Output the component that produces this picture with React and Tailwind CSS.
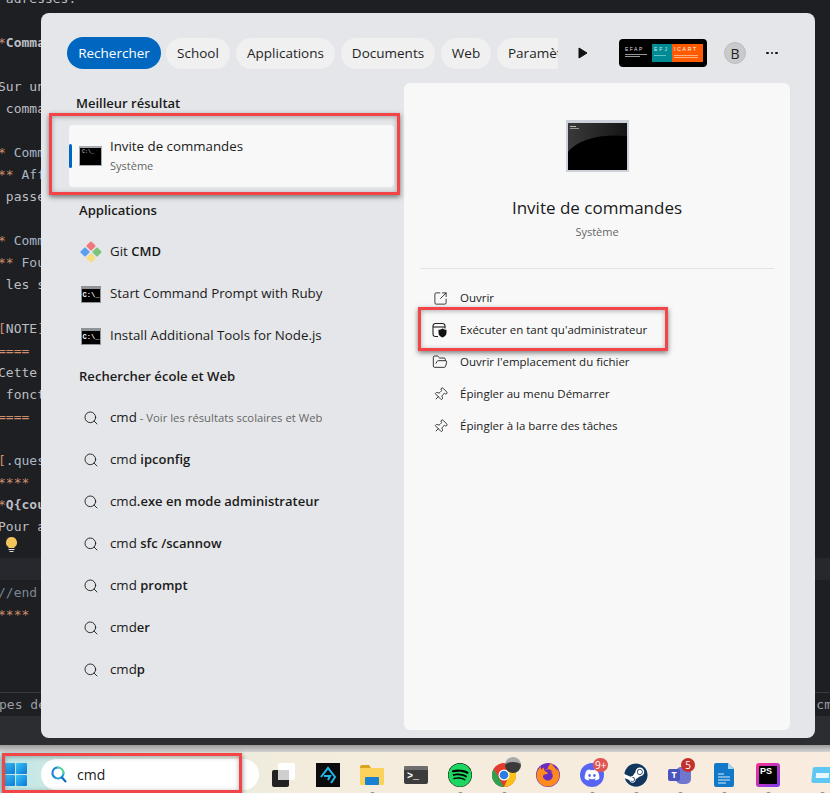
import React from 'react';
import { ChevronRight, Search, SquareArrowOutUpRight, FolderOpen, Pin } from 'lucide-react';
import { FaSpotify, FaDiscord, FaSteam, FaFirefoxBrowser } from 'react-icons/fa';

const editorLines = [
  [['', ' adresses:']],
  [],
  [['*', ''], ['b', 'Comma']],
  [],
  [['', 'Sur un']],
  [['', ' comma']],
  [],
  [['*', '* '], ['c', 'Comm']],
  [['*', '** '], ['c', 'Aff']],
  [['', ' passe']],
  [],
  [['*', '* '], ['c', 'Comm']],
  [['*', '** '], ['c', 'Fou']],
  [['', ' les s']],
  [],
  [['*', '['], ['', 'NOTE'], ['*', ']']],
  [['*', '====']],
  [['', 'Cette']],
  [['', ' fonct']],
  [['*', '====']],
  [],
  [['*', '['], ['c', '.ques']],
  [['*', '****']],
  [['*', '*'], ['b', 'Q{cou']],
  [['', 'Pour a']],
];

const apps = [
  { label: 'Start Command Prompt with Ruby' },
  { label: 'Install Additional Tools for Node.js' },
];

const webResults = [
  { plain: 'cmd', hint: ' - Voir les résultats scolaires et Web' },
  { plain: 'cmd ', bold: 'ipconfig' },
  { plain: 'cmd', bold: '.exe en mode administrateur' },
  { plain: 'cmd ', bold: 'sfc /scannow' },
  { plain: 'cmd ', bold: 'prompt' },
  { plain: 'cmd', bold: 'er' },
  { plain: 'cmd', bold: 'p' },
];

const tabs = [
  { label: 'School', w: 'w-[64px]' },
  { label: 'Applications', w: 'w-[99px]' },
  { label: 'Documents', w: 'w-[94px]' },
  { label: 'Web', w: 'w-[50px]' },
];

function CmdIcon() {
  return (
    <div className="w-[20px] h-[17px] bg-[#8f9296] flex flex-col px-[1px] pb-[1px] pt-[3px]">
      <div className="flex-1 bg-black overflow-hidden text-white text-[7px] leading-[12px] font-bold font-['Liberation_Mono',monospace] text-center">
        C:\_
      </div>
    </div>
  );
}

// the best-match tile uses a bigger icon with the prompt in its corner
function BestCmdIcon() {
  return (
    <div className="w-[23px] h-[20px] bg-[#a9abb0] flex flex-col px-[1px] pb-[1px] pt-[2px]">
      <div className="flex-1 bg-black overflow-hidden text-[#ddd] text-[5px] leading-[8px] pl-[2px] font-['Liberation_Mono',monospace]">
        C:\_
      </div>
    </div>
  );
}

function GitIcon() {
  return (
    <svg width="22" height="22" viewBox="0 0 22 22">
      <rect x="7.5" y="1.5" width="7" height="7" rx="1" transform="rotate(45 11 5)" fill="#f0787a" />
      <rect x="13.5" y="7.5" width="7" height="7" rx="1" transform="rotate(45 17 11)" fill="#7cc47a" />
      <rect x="7.5" y="13.5" width="7" height="7" rx="1" transform="rotate(45 11 17)" fill="#f7df7e" />
      <rect x="1.5" y="7.5" width="7" height="7" rx="1" transform="rotate(45 5 11)" fill="#5c9ff0" />
    </svg>
  );
}

function ShieldWindow() {
  return (
    <svg width="16" height="16" viewBox="0 0 16 16" fill="none" stroke="#1f1f1f" strokeWidth="1.1">
      <path d="M6 14.5H3.500A2.500 2.500 0 0 1 1 12V4A2.500 2.500 0 0 1 3.500 1.500h7A2.500 2.500 0 0 1 13 4v2.500" />
      <path d="M1 5h12" />
      <path d="M10.500 6.500c1.200 1 2.500 1.300 4 1.300v3c0 2.500-1.800 4-4 4.700-2.200-.7-4-2.200-4-4.700v-3c1.500 0 2.800-.3 4-1.300z" fill="#111" stroke="none" />
    </svg>
  );
}

function LargeCmdIcon() {
  return (
    <div className="w-[63px] h-[52px] bg-[#cdd1d9] pt-[3px] px-[2px] pb-[2px]">
      <svg width="59" height="47" viewBox="0 0 59 47" className="block">
        <defs>
          <linearGradient id="cmdGlow" x1="0" y1="0" x2="1" y2="0">
            <stop offset="0" stopColor="#3a3a3a" />
            <stop offset="1" stopColor="#151515" />
          </linearGradient>
        </defs>
        <rect width="59" height="47" fill="#000" />
        <path d="M0 0h59v13C38 11 12 14 0 29z" fill="url(#cmdGlow)" />
        <rect x="2" y="3" width="6" height="1" fill="#bbb" />
        <rect x="2" y="5" width="9" height="1" fill="#999" />
      </svg>
    </div>
  );
}

function SchoolLogo() {
  return (
    <div className="w-[88px] h-[28px] bg-black rounded-[4px] flex items-center pl-[6px] font-['Liberation_Sans',sans-serif]">
      <div className="w-[27px] h-[18px] pt-[2px]">
        <p className="text-[5px] leading-[7px] tracking-[1.5px] text-[#ddd] whitespace-nowrap">EFAP</p>
        <div className="mt-[1px] w-[22px] h-[1px] bg-[#999]" />
        <div className="mt-[1px] w-[15px] h-[1px] bg-[#999]" />
      </div>
      <div className="w-[20px] h-[18px] bg-[#008a94] pt-[2px] pl-[2px]">
        <p className="text-[5px] leading-[7px] tracking-[2px] text-[#cfeef0] whitespace-nowrap">EFJ</p>
        <div className="mt-[2px] w-[12px] h-[1px] bg-[#5fc0c6]" />
      </div>
      <div className="w-[31px] h-[18px] bg-[#ff5a00] pt-[2px] pl-[2px]">
        <p className="text-[5px] leading-[7px] tracking-[1.8px] text-white whitespace-nowrap">ICART</p>
        <div className="mt-[2px] w-[24px] h-[1px] bg-[#ffb27f]" />
        <div className="mt-[1px] w-[24px] h-[1px] bg-[#ffb27f]" />
      </div>
    </div>
  );
}

function ResultRow({ icon, children }) {
  return (
    <div className="h-[42px] flex items-center text-[13.3px] text-[#1a1a1a] whitespace-nowrap">
      <div className="w-[24px] flex justify-center shrink-0">{icon}</div>
      <div className="ml-[7px] flex-1">{children}</div>
      <ChevronRight size={14} strokeWidth={1.6} className="text-[#555]" />
    </div>
  );
}

function SearchGlyph() {
  return <Search size={16} strokeWidth={1.3} className="text-[#111]" />;
}

function ActionRow({ icon, label }) {
  return (
    <div className="h-[32px] flex items-center text-[11.5px] text-[#1a1a1a] whitespace-nowrap">
      <div className="w-[16px] flex justify-center shrink-0">{icon}</div>
      <span className="ml-[12px]">{label}</span>
    </div>
  );
}

function StartLogo() {
  return (
    <svg width="23" height="23" viewBox="0 0 23 23" className="shrink-0">
      <defs>
        <linearGradient id="winBlue" x1="0" y1="0" x2="1" y2="1">
          <stop offset="0" stopColor="#3cc4f4" />
          <stop offset="1" stopColor="#0a78d8" />
        </linearGradient>
      </defs>
      <rect x="0" y="0" width="11" height="11" rx="1" fill="url(#winBlue)" />
      <rect x="12" y="0" width="11" height="11" rx="1" fill="url(#winBlue)" />
      <rect x="0" y="12" width="11" height="11" rx="1" fill="url(#winBlue)" />
      <rect x="12" y="12" width="11" height="11" rx="1" fill="url(#winBlue)" />
    </svg>
  );
}

function SearchColor() {
  return (
    <svg width="16" height="17" viewBox="0 0 16 17" fill="none" strokeWidth="2" strokeLinecap="round">
      <path d="M7 1.500a5.500 5.500 0 0 0-2.500 10.400" stroke="#1b83e0" />
      <path d="M4.500 11.900A5.500 5.500 0 0 0 12.500 7" stroke="#2aa0d8" />
      <path d="M12.500 7A5.500 5.500 0 0 0 7 1.500" stroke="#4fd0a0" />
      <path d="M11 11.500l3.500 4" stroke="#1268c0" />
    </svg>
  );
}

function TaskIcon({ children, running, className = '' }) {
  return (
    <div className={`relative w-[24px] h-[24px] shrink-0 flex items-center justify-center ${className}`}>
      {children}
      {running && <span className="absolute left-[10px] top-[29px] w-[5px] h-[5px] rounded-full bg-[#8a8a8a]" />}
    </div>
  );
}

function Badge({ text, color }) {
  return (
    <span className={`absolute -top-[5px] left-[13px] h-[14px] min-w-[14px] px-[2px] rounded-full text-white text-[10px] leading-[14px] text-center ${color}`}>
      {text}
    </span>
  );
}

function RedBox({ className }) {
  return (
    <div className={`absolute border-[3px] border-[#f34448] shadow-[0_2px_5px_rgba(0,0,0,0.5),inset_0_1px_5px_rgba(0,0,0,0.3)] ${className}`} />
  );
}

export default function App() {
  return (
    <div className="relative w-[830px] h-[793px] overflow-hidden bg-[#1e1f22] font-['Open_Sans',sans-serif]">
      {/* Editor behind the search window */}
      <div className="h-[745px] flex flex-col font-['DejaVu_Sans_Mono',monospace] text-[13px] text-[#bcbec4]">
        <div className="flex-1 -mt-[12px] -ml-[2px] overflow-hidden">
          {editorLines.map((segs, i) => (
            <div key={i} className="h-[22px] leading-[22px] whitespace-pre">
              {segs.map(([kind, text], j) => (
                <span
                  key={j}
                  className={kind === '*' ? 'text-[#cf8e6d]' : kind === 'b' ? 'font-bold text-[#bcbec4]' : kind === 'c' ? 'text-[#a9b7c6]' : ''}
                >
                  {kind === '*' && !text ? '*' : text}
                </span>
              ))}
            </div>
          ))}
          <div className="h-[22px] pl-[7px] pt-[1px]">
            <svg width="13" height="16" viewBox="0 0 13 16" className="-mt-[2px]">
              <path d="M6.500 0a5.500 5.500 0 0 0-3 10.100V11h6v-.9A5.500 5.500 0 0 0 6.500 0z" fill="#f2c55c" />
              <path d="M3.500 12.500h6M4.500 14.500h4" stroke="#ddd" strokeWidth="1" />
            </svg>
          </div>
          <div className="h-[22px] -mt-[2px] mb-[2px] bg-[#26282e]" />
          <div className="h-[22px] leading-[22px] text-[#7a8694]">//end</div>
          <div className="h-[22px] leading-[22px] text-[#cf8e6d]">****</div>
        </div>
        <div className="h-[24px] border-t border-[#393b40] flex justify-between items-center leading-[22px] text-[#9a9da3] overflow-hidden">
          <span className="-ml-[1px]">pes de</span>
          <span className="-mr-[2px]">cm</span>
        </div>
        <div className="h-[29px] bg-[#2b2d30]" />
      </div>

      {/* Strip between editor and taskbar */}
      <div className="h-[7px] bg-gradient-to-b from-[#9c9c9c] to-[#d4d4d4]" />

      {/* Taskbar */}
      <div className="h-[41px] flex items-center pt-[4px] bg-[linear-gradient(90deg,#bfe6e6_0%,#dcebe4_15%,#f3ecdc_35%,#f9ecdf_100%)]">
        <div className="ml-[4px]"><StartLogo /></div>
        <div className="ml-[14px] w-[218px] h-[31px] rounded-full bg-white flex items-center pl-[10px] shrink-0">
          <SearchColor />
          <span className="ml-[10px] text-[14px] text-[#1a1a1a]">cmd</span>
        </div>
        <div className="ml-[13px] flex gap-[20px]">
          <TaskIcon>
            <div className="relative w-[24px] h-[24px]">
              <div className="absolute left-[6px] top-0 w-[17px] h-[17px] rounded-[2px] bg-white" />
              <div className="absolute left-0 top-[7px] w-[17px] h-[17px] rounded-[2px] bg-[#222]" />
              <div className="absolute left-[6px] top-[7px] w-[11px] h-[10px] bg-[#cfcfcf]" />
            </div>
          </TaskIcon>
          <TaskIcon>
            <svg width="24" height="24" viewBox="0 0 24 24" fill="none" stroke="#22b8ee" strokeWidth="2">
              <rect width="24" height="24" fill="#0b0b0b" stroke="none" />
              <path d="M5 14l7-9 7 9-4 6" />
              <path d="M8 13h6l-2 4" />
            </svg>
          </TaskIcon>
          <TaskIcon running>
            <svg width="24" height="20" viewBox="0 0 24 20">
              <path d="M0 2a2 2 0 0 1 2-2h7l2 3h-11z" fill="#d9a520" />
              <rect y="3" width="24" height="17" rx="1" fill="#fbd35a" />
              <rect x="5" y="12" width="14" height="8" rx="1" fill="#1a80d0" />
            </svg>
          </TaskIcon>
          <TaskIcon>
            <div className="w-[24px] h-[18px] rounded-[2px] bg-[#3c3c3c] flex flex-col">
              <div className="h-[4px] bg-[#6e6e6e] rounded-t-[2px]" />
              <span className="text-white text-[10px] leading-[13px] pl-[3px] font-bold font-['Liberation_Mono',monospace]">&gt;_</span>
            </div>
          </TaskIcon>
          <TaskIcon running>
            <FaSpotify size={24} className="text-[#1ed760] bg-black rounded-full" />
          </TaskIcon>
          <TaskIcon running>
            <svg width="24" height="24" viewBox="0 0 24 24">
              <circle cx="12" cy="12" r="12" fill="#e33b2e" />
              <path d="M12 24A12 12 0 0 1 1.600 6L7 15z" fill="#2fa14f" />
              <path d="M12 24A12 12 0 0 0 23 7H12l4 8z" fill="#fbc116" />
              <circle cx="12" cy="12" r="5.500" fill="#fff" />
              <circle cx="12" cy="12" r="4.300" fill="#2a7de1" />
            </svg>
            <span className="absolute -top-[6px] left-[13px] w-[16px] h-[16px] rounded-full bg-[#3a3a3a] border-t-[5px] border-[#aaa]" />
          </TaskIcon>
          <TaskIcon>
            <div className="w-[24px] h-[24px] rounded-full bg-[#6a2bc0] flex items-center justify-center">
              <FaFirefoxBrowser size={24} className="text-[#ff8a1e]" />
            </div>
          </TaskIcon>
          <TaskIcon running>
            <div className="w-[24px] h-[24px] rounded-full bg-[#5865f2] flex items-center justify-center">
              <FaDiscord size={16} className="text-white" />
            </div>
            <Badge text="9+" color="bg-[#e25555]" />
          </TaskIcon>
          <TaskIcon running>
            <div className="w-[24px] h-[24px] rounded-full bg-white flex items-center justify-center">
              <FaSteam size={24} className="text-[#12365c]" />
            </div>
          </TaskIcon>
          <TaskIcon running>
            <div className="absolute left-[8px] top-[4px] w-[15px] h-[17px] rounded-[5px] bg-[#6f77cf]" />
            <div className="absolute left-0 top-[6px] w-[12px] h-[12px] rounded-[2px] bg-[#4b53bc] text-white text-[9px] leading-[12px] text-center font-bold">T</div>
            <Badge text="5" color="bg-[#c4302b]" />
          </TaskIcon>
          <TaskIcon running>
            <svg width="20" height="24" viewBox="0 0 20 24">
              <path d="M2 0h12l6 6v16a2 2 0 0 1-2 2H2a2 2 0 0 1-2-2V2a2 2 0 0 1 2-2z" fill="#1279c9" />
              <path d="M14 0l6 6h-6z" fill="#a6d4f2" />
              <path d="M4 11h6M4 14h12M4 17h12M4 20h8" stroke="#d8eefc" strokeWidth="1.200" />
            </svg>
          </TaskIcon>
          <TaskIcon running>
            <div className="w-[24px] h-[24px] rounded-[3px] bg-[linear-gradient(135deg,#ff2f92,#7a3cf0)] p-[3px]">
              <div className="w-full h-full bg-black text-white text-[9px] leading-[11px] pl-[1px] font-bold font-['Liberation_Sans',sans-serif]">PS</div>
            </div>
          </TaskIcon>
          <TaskIcon running className="ml-[10px]">
            <div className="w-[20px] h-[16px] rounded-[2px] bg-[#5fc8f2] flex items-center justify-center -skew-x-6">
              <div className="w-[13px] h-[5px] bg-[#e8f7ff]" />
            </div>
          </TaskIcon>
        </div>
      </div>

      {/* Search window */}
      <div className="absolute left-[41px] top-[13px] w-[774px] h-[725px] rounded-[8px] bg-[#e5e6e9] flex flex-col pt-[24px] pb-[8px] pr-[25px]">
        <div className="flex items-center h-[32px] pl-[26px] text-[13.5px] text-[#1f1f1f] whitespace-nowrap">
          <div className="w-[94px] h-[32px] rounded-full bg-[#0067c0] text-white flex items-center justify-center">Rechercher</div>
          <div className="ml-[5px] flex gap-[6px]">
            {tabs.map((t) => (
              <div key={t.label} className={`${t.w} h-[31px] rounded-full bg-[#f0f0f1] flex items-center justify-center`}>{t.label}</div>
            ))}
          </div>
          <div className="ml-[6px] w-[61px] h-[31px] rounded-l-full bg-[#f0f0f1] pl-[11px] leading-[31px] overflow-hidden">Paramètres</div>
          <svg width="10" height="12" viewBox="0 0 10 12" className="ml-[20px]">
            <path d="M1 1l8 5-8 5z" fill="#111" stroke="#111" strokeLinejoin="round" />
          </svg>
          <div className="ml-[31px]"><SchoolLogo /></div>
          <div className="ml-[17px] w-[22px] h-[22px] rounded-full bg-[#c9cacc] border border-[#bdbdbf] flex items-center justify-center text-[14px]">B</div>
          <div className="ml-[20px] flex gap-[2px]">
            <span className="w-[2.500px] h-[2.500px] rounded-full bg-[#111]" />
            <span className="w-[2.500px] h-[2.500px] rounded-full bg-[#111]" />
            <span className="w-[2.500px] h-[2.500px] rounded-full bg-[#111]" />
          </div>
        </div>

        <div className="flex-1 mt-[14px] flex min-h-0">
          {/* Results */}
          <div className="w-[363px] pt-[10px]">
            <h3 className="ml-[35px] h-[20px] leading-[20px] text-[13px] font-semibold text-[#1a1a1a]">Meilleur résultat</h3>
            <div className="ml-[28px] mt-[12px] w-[325px] h-[62px] rounded-[4px] bg-[#f8f8f8] flex items-center">
              <div className="w-[3px] h-[24px] rounded-full bg-[#0067c0]" />
              <div className="ml-[7px] w-[23px] flex justify-center"><BestCmdIcon /></div>
              <div className="ml-[8px]">
                <p className="text-[13.3px] leading-[20px] text-[#1a1a1a]">Invite de commandes</p>
                <p className="text-[11px] leading-[20px] text-[#666]">Système</p>
              </div>
            </div>

            <div className="ml-[38px] w-[336px]">
              <h3 className="mt-[13px] h-[20px] leading-[20px] text-[13.1px] font-semibold text-[#1a1a1a]">Applications</h3>
              <div className="mt-[11px]">
                <ResultRow icon={<GitIcon />}>Git <b className="font-semibold text-[13px]">CMD</b></ResultRow>
                {apps.map((a) => (
                  <ResultRow key={a.label} icon={<CmdIcon />}>{a.label}</ResultRow>
                ))}
              </div>
              <h3 className="mt-[9px] h-[20px] leading-[20px] text-[13.1px] font-semibold text-[#1a1a1a]">Rechercher école et Web</h3>
              <div className="mt-[11px]">
                {webResults.map((r) => (
                  <ResultRow key={r.plain + (r.bold || r.hint)} icon={<SearchGlyph />}>
                    <span className="whitespace-pre">{r.plain}</span>
                    {r.bold && <b className="font-semibold text-[13px]">{r.bold}</b>}
                    {r.hint && <span className="text-[11.3px] text-[#666]">{r.hint}</span>}
                  </ResultRow>
                ))}
              </div>
            </div>
          </div>

          {/* Preview */}
          <div className="w-[386px] rounded-[6px] bg-[#f8f8f8] flex flex-col items-center pt-[37px]">
            <LargeCmdIcon />
            <p className="mt-[25px] text-[17px] leading-[22px] text-[#1a1a1a]">Invite de commandes</p>
            <p className="mt-[3px] text-[11px] leading-[20px] text-[#666]">Système</p>
            <div className="mt-[26px] w-[354px] h-px bg-[#e3e3e3]" />
            <div className="mt-[13px] w-[354px] pl-[12px]">
              <ActionRow icon={<SquareArrowOutUpRight size={15} strokeWidth={1.3} />} label="Ouvrir" />
              <ActionRow icon={<ShieldWindow />} label="Exécuter en tant qu'administrateur" />
              <ActionRow icon={<FolderOpen size={16} strokeWidth={1.3} />} label="Ouvrir l'emplacement du fichier" />
              <ActionRow icon={<Pin size={15} strokeWidth={1.3} className="rotate-45" />} label="Épingler au menu Démarrer" />
              <ActionRow icon={<Pin size={15} strokeWidth={1.3} className="rotate-45" />} label="Épingler à la barre des tâches" />
            </div>
          </div>
        </div>
      </div>

      {/* Annotation boxes */}
      <RedBox className="left-[49px] top-[113px] w-[351px] h-[82px]" />
      <RedBox className="left-[418px] top-[307px] w-[250px] h-[44px]" />
      <RedBox className="left-[2px] top-[753px] w-[240px] h-[40px]" />
    </div>
  );
}
